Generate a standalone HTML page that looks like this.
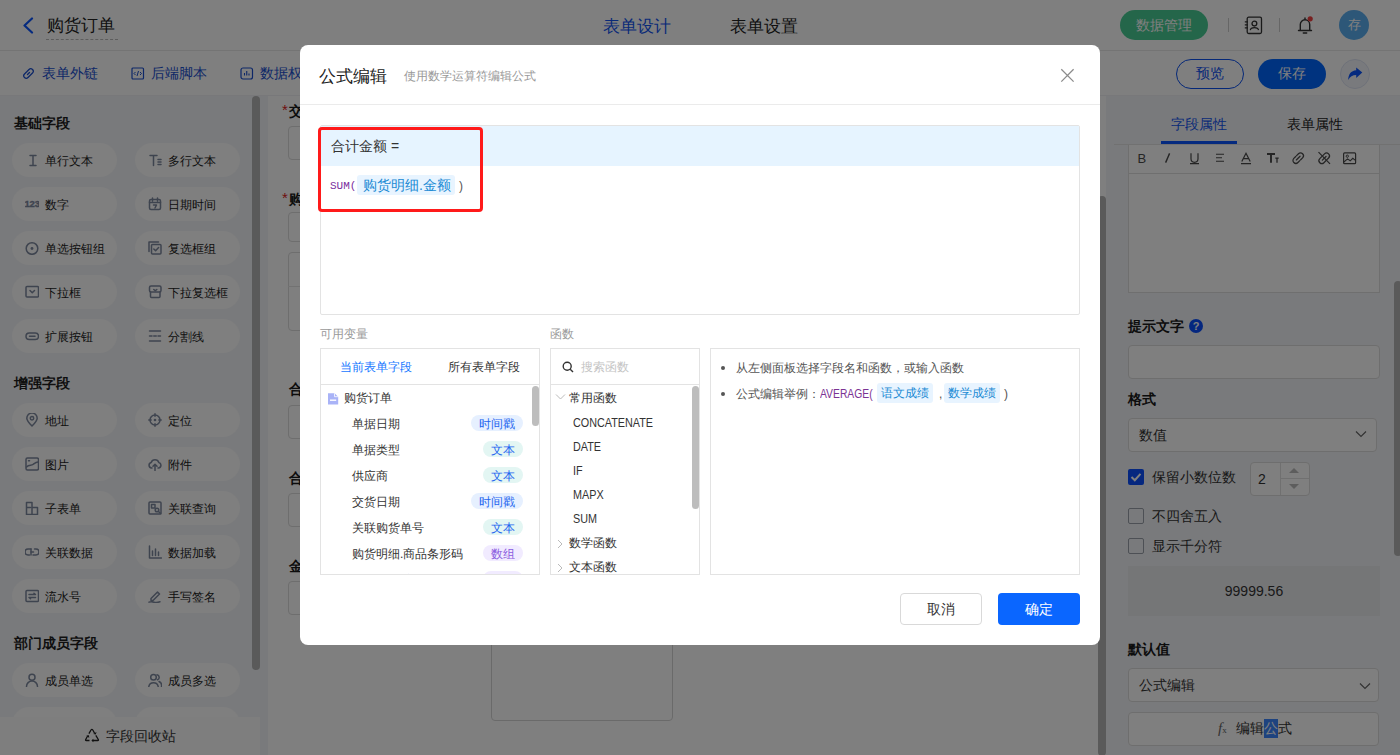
<!DOCTYPE html><html><head><meta charset="utf-8"><style>
*{box-sizing:border-box;margin:0;padding:0}
html,body{width:1400px;height:755px;overflow:hidden;background:#fff;font-family:"Liberation Sans",sans-serif;color:#333}
.a{position:absolute;white-space:nowrap}
#hdr{left:0;top:0;width:1400px;height:51px;border-bottom:1px solid #e9e9e9;background:#fff}
#tb{left:0;top:51px;width:1400px;height:45px;background:#fff;border-bottom:1px solid #f0f1f4}
#lp{left:0;top:96px;width:268px;height:659px;background:#f3f5f8}
#lgap{display:none}
#cv{left:268px;top:96px;width:838px;height:659px;background:#fff}
#rp{left:1106px;top:96px;width:294px;height:659px;background:#f3f5f8}
.fb{position:absolute;width:105px;height:34px;border-radius:17px;background:#fefefe;font-size:12px;color:#222;line-height:36px;padding-left:33px}
.fb svg{position:absolute;left:13px;top:10px}
.gt{position:absolute;left:14px;font-size:14px;font-weight:bold;color:#1f1f1f;line-height:20px}
#mask{left:0;top:0;width:1400px;height:755px;background:rgba(0,0,0,.5)}
#modal{left:300px;top:45px;width:800px;height:600px;background:#fff;border-radius:8px}
</style></head><body>
<div id="hdr" class="a"></div><div id="tb" class="a"></div><div id="lp" class="a"></div><div id="lgap" class="a"></div><div id="cv" class="a"></div><div id="rp" class="a"></div>
<svg class="a" style="left:22px;top:17px" width="12" height="17" viewBox="0 0 12 17"><path d="M10 1.5 L2.5 8.5 L10 15.5" fill="none" stroke="#0a55ff" stroke-width="2.2" stroke-linecap="round" stroke-linejoin="round"/></svg>
<div class="a" style="left:47px;top:14px;font-size:17px;line-height:24px;color:#222">购货订单</div>
<div class="a" style="left:46px;top:39px;width:72px;height:0;border-top:1px dashed #bbb"></div>
<div class="a" style="left:603px;top:15px;font-size:17px;line-height:24px;color:#1456f0">表单设计</div>
<div class="a" style="left:730px;top:15px;font-size:17px;line-height:24px;color:#222">表单设置</div>
<div class="a" style="left:1120px;top:10px;width:88px;height:30px;border-radius:15px;background:#48cc94;color:#fff;font-size:14px;line-height:30px;text-align:center">数据管理</div>
<div class="a" style="left:1228px;top:18px;width:1px;height:14px;background:#ccc"></div>
<div class="a" style="left:1279px;top:18px;width:1px;height:14px;background:#ccc"></div>
<svg class="a" style="left:1244px;top:16px" width="20" height="19" viewBox="0 0 20 19"><rect x="3.2" y="1.2" width="14.3" height="16.3" rx="1.5" fill="none" stroke="#333" stroke-width="1.3"/><circle cx="10.4" cy="7.6" r="2.4" fill="none" stroke="#333" stroke-width="1.3"/><path d="M6.3 14.2 C6.8 10.8 14 10.8 14.5 14.2" fill="none" stroke="#333" stroke-width="1.3"/><path d="M0.8 5.8h3.2M0.8 8.8h3.2M0.8 11.8h3.2" stroke="#333" stroke-width="1.2"/></svg>
<svg class="a" style="left:1296px;top:15px" width="20" height="20" viewBox="0 0 20 20"><path d="M4.3 15.5 V9.5 A4.7 4.7 0 0 1 13.7 9.5 V15.5 M2.5 15.5 H15.5 M9 3v1.5" fill="none" stroke="#333" stroke-width="1.4" stroke-linejoin="round" stroke-linecap="round"/><path d="M7.3 18 H10.7" stroke="#333" stroke-width="1.4" stroke-linecap="round"/><circle cx="14.2" cy="3.8" r="2.6" fill="#f04040"/></svg>
<div class="a" style="left:1339px;top:10px;width:30px;height:30px;border-radius:15px;background:#5aaef0;color:#fff;font-size:13px;line-height:30px;text-align:center">存</div>
<svg class="a" style="left:22px;top:67px" width="13" height="13" viewBox="0 0 13 13"><path d="M5.5 7.5 L7.5 5.5 M4.5 5 L2.5 7 A2.1 2.1 0 0 0 6 10.5 L8 8.5 M8.5 8 L10.5 6 A2.1 2.1 0 0 0 7 2.5 L5 4.5" fill="none" stroke="#1a4fd0" stroke-width="1.3" stroke-linecap="round"/></svg>
<div class="a" style="left:42px;top:63px;font-size:14px;line-height:20px;color:#1a4fd0">表单外链</div>
<svg class="a" style="left:131px;top:67px" width="14" height="13" viewBox="0 0 14 13"><rect x="1" y="1" width="11.5" height="11" rx="1" fill="none" stroke="#1a4fd0" stroke-width="1.2"/><path d="M4.5 5 L3 6.5 L4.5 8 M9 5 L10.5 6.5 L9 8 M7.5 4 L6 9" fill="none" stroke="#1a4fd0" stroke-width="1"/></svg>
<div class="a" style="left:151px;top:63px;font-size:14px;line-height:20px;color:#1a4fd0">后端脚本</div>
<svg class="a" style="left:240px;top:67px" width="14" height="13" viewBox="0 0 14 13"><rect x="1" y="1" width="11.5" height="11" rx="2" fill="none" stroke="#1a4fd0" stroke-width="1.2"/><path d="M4.5 8.5V6 M6.75 8.5V4 M9 8.5V6.5" stroke="#1a4fd0" stroke-width="1.1"/></svg>
<div class="a" style="left:260px;top:63px;font-size:14px;line-height:20px;color:#1a4fd0">数据权限</div>
<div class="a" style="left:1176px;top:59px;width:68px;height:30px;border-radius:15px;border:1px solid #0a50f0;color:#1050f0;font-size:14px;line-height:27px;text-align:center">预览</div>
<div class="a" style="left:1258px;top:59px;width:68px;height:30px;border-radius:15px;background:#0066ff;color:#fff;font-size:14px;line-height:29px;text-align:center">保存</div>
<div class="a" style="left:1340px;top:59px;width:30px;height:30px;border-radius:15px;border:1px solid #dde3f3;background:#f3f5fa"></div>
<svg class="a" style="left:1340px;top:59px" width="30" height="30" viewBox="0 0 30 30"><path d="M22.3 13.6 L16.2 8.6 V11.2 C11 11.6 8.4 15.2 8.2 21 C10 17.6 12.6 16.1 16.2 16.1 V18.9 Z" fill="#0a55ff"/></svg>
<div class="gt" style="top:113px">基础字段</div>
<div class="fb" style="left:12px;top:143px"><svg width="14" height="14" viewBox="0 0 14 14"><path d="M5 2.5h6M5 12.5h6M8 2.5v10" stroke="#7d889e" fill="none" stroke-width="1.5" stroke-linecap="round" stroke-linejoin="round"/></svg>单行文本</div>
<div class="fb" style="left:135px;top:143px"><svg width="14" height="14" viewBox="0 0 14 14"><path d="M2 2.5h7M5.5 2.5v10M10 6.5h3M10 9h3M10 11.5h3" stroke="#7d889e" fill="none" stroke-width="1.5" stroke-linecap="round" stroke-linejoin="round"/></svg>多行文本</div>
<div class="fb" style="left:12px;top:187px"><svg width="14" height="14" viewBox="0 0 14 14"><text x="-0.5" y="10.2" font-size="9.5" font-weight="bold" fill="#7d889e" stroke="#7d889e" stroke-width="0.35" letter-spacing="-0.2" font-family="Liberation Sans">123</text></svg>数字</div>
<div class="fb" style="left:135px;top:187px"><svg width="14" height="14" viewBox="0 0 14 14"><rect x="1.5" y="2.5" width="11" height="10" rx="1.5" stroke="#7d889e" fill="none" stroke-width="1.5" stroke-linecap="round" stroke-linejoin="round"/><path d="M1.5 5.5h11M4.5 1v3M9.5 1v3M5.5 8h3l-1.5 3" stroke="#7d889e" fill="none" stroke-width="1.5" stroke-linecap="round" stroke-linejoin="round" stroke-width="1.2"/></svg>日期时间</div>
<div class="fb" style="left:12px;top:231px"><svg width="14" height="14" viewBox="0 0 14 14"><circle cx="7" cy="7.5" r="5.8" stroke="#7d889e" fill="none" stroke-width="1.5" stroke-linecap="round" stroke-linejoin="round"/><circle cx="7" cy="7.5" r="1.4" fill="#7d889e"/></svg>单选按钮组</div>
<div class="fb" style="left:135px;top:231px"><svg width="14" height="14" viewBox="0 0 14 14"><rect x="3.5" y="3.5" width="9.5" height="9.5" rx="1" stroke="#7d889e" fill="none" stroke-width="1.5" stroke-linecap="round" stroke-linejoin="round"/><path d="M1 10.5V1h9.5M5.8 8l1.8 1.8 3-3.2" stroke="#7d889e" fill="none" stroke-width="1.5" stroke-linecap="round" stroke-linejoin="round"/></svg>复选框组</div>
<div class="fb" style="left:12px;top:275px"><svg width="14" height="14" viewBox="0 0 14 14"><rect x="1" y="1.5" width="12.5" height="10.5" rx="1" stroke="#7d889e" fill="none" stroke-width="1.5" stroke-linecap="round" stroke-linejoin="round"/><path d="M5 5.5l2.25 2.25 2.25-2.25" stroke="#7d889e" fill="none" stroke-width="1.5" stroke-linecap="round" stroke-linejoin="round"/></svg>下拉框</div>
<div class="fb" style="left:135px;top:275px"><svg width="14" height="14" viewBox="0 0 14 14"><rect x="1.5" y="1" width="11.5" height="6" rx="1.5" stroke="#7d889e" fill="none" stroke-width="1.5" stroke-linecap="round" stroke-linejoin="round"/><path d="M2.5 7v4.5a1 1 0 0 0 1 1h7.5a1 1 0 0 0 1-1V7M5.8 4.5l1.5 1.3 1.5-1.3" stroke="#7d889e" fill="none" stroke-width="1.5" stroke-linecap="round" stroke-linejoin="round"/></svg>下拉复选框</div>
<div class="fb" style="left:12px;top:319px"><svg width="14" height="14" viewBox="0 0 14 14"><rect x="1" y="4" width="12.5" height="6.5" rx="3.25" stroke="#7d889e" fill="none" stroke-width="1.5" stroke-linecap="round" stroke-linejoin="round"/><path d="M4.5 7.25h5.5" stroke="#7d889e" fill="none" stroke-width="1.5" stroke-linecap="round" stroke-linejoin="round"/></svg>扩展按钮</div>
<div class="fb" style="left:135px;top:319px"><svg width="14" height="14" viewBox="0 0 14 14"><path d="M1.5 2h11M1.5 7h2.5M5.75 7h2.5M10 7h2.5M1.5 12h11" stroke="#7d889e" fill="none" stroke-width="1.5" stroke-linecap="round" stroke-linejoin="round"/></svg>分割线</div>
<div class="gt" style="top:373px">增强字段</div>
<div class="fb" style="left:12px;top:403px"><svg width="14" height="14" viewBox="0 0 14 14"><path d="M7 13C3.5 9.5 1.8 7.3 1.8 5.2A5.2 5.2 0 0 1 12.2 5.2C12.2 7.3 10.5 9.5 7 13Z" stroke="#7d889e" fill="none" stroke-width="1.5" stroke-linecap="round" stroke-linejoin="round"/><circle cx="7" cy="5.3" r="1.7" stroke="#7d889e" fill="none" stroke-width="1.5" stroke-linecap="round" stroke-linejoin="round"/></svg>地址</div>
<div class="fb" style="left:135px;top:403px"><svg width="14" height="14" viewBox="0 0 14 14"><circle cx="7" cy="7" r="5" stroke="#7d889e" fill="none" stroke-width="1.5" stroke-linecap="round" stroke-linejoin="round"/><circle cx="7" cy="7" r="1.3" fill="#7d889e"/><path d="M7 .8v2.4M7 10.8v2.4M.8 7h2.4M10.8 7h2.4" stroke="#7d889e" fill="none" stroke-width="1.5" stroke-linecap="round" stroke-linejoin="round"/></svg>定位</div>
<div class="fb" style="left:12px;top:447px"><svg width="14" height="14" viewBox="0 0 14 14"><rect x="1" y="1" width="12.5" height="12" rx="1.5" stroke="#7d889e" fill="none" stroke-width="1.5" stroke-linecap="round" stroke-linejoin="round"/><path d="M1.5 10C4 7 6 9 8 7.5S11 5 13 5M3.5 3.8h1" stroke="#7d889e" fill="none" stroke-width="1.5" stroke-linecap="round" stroke-linejoin="round"/></svg>图片</div>
<div class="fb" style="left:135px;top:447px"><svg width="14" height="14" viewBox="0 0 14 14"><path d="M4 11H3.5A2.8 2.8 0 0 1 3.2 5.5 4 4 0 0 1 10.8 5.5 2.8 2.8 0 0 1 10.5 11H10M7 13.5V7.5M5 9.3l2-2 2 2" stroke="#7d889e" fill="none" stroke-width="1.5" stroke-linecap="round" stroke-linejoin="round"/></svg>附件</div>
<div class="fb" style="left:12px;top:491px"><svg width="14" height="14" viewBox="0 0 14 14"><path d="M1.5 1.5h5.5v12H1.5zM7 6.5h5.5v7H7M1.5 6.5h4" stroke="#7d889e" fill="none" stroke-width="1.5" stroke-linecap="round" stroke-linejoin="round"/></svg>子表单</div>
<div class="fb" style="left:135px;top:491px"><svg width="14" height="14" viewBox="0 0 14 14"><rect x="1" y="1" width="12" height="12" rx="1" stroke="#7d889e" fill="none" stroke-width="1.5" stroke-linecap="round" stroke-linejoin="round"/><rect x="3.5" y="3.5" width="3.5" height="3.5" stroke="#7d889e" fill="none" stroke-width="1.5" stroke-linecap="round" stroke-linejoin="round" stroke-width="1.2"/><circle cx="9" cy="9" r="1.8" stroke="#7d889e" fill="none" stroke-width="1.5" stroke-linecap="round" stroke-linejoin="round" stroke-width="1.2"/><path d="M10.3 10.3l2.5 2.5" stroke="#7d889e" fill="none" stroke-width="1.5" stroke-linecap="round" stroke-linejoin="round"/></svg>关联查询</div>
<div class="fb" style="left:12px;top:535px"><svg width="14" height="14" viewBox="0 0 14 14"><path d="M6 4H3a2 2 0 0 0 0 6h1.5M8 10h3a2 2 0 0 0 0-6H9.5M6 7h2.5" stroke="#7d889e" fill="none" stroke-width="1.5" stroke-linecap="round" stroke-linejoin="round"/><path d="M6 4v6" stroke="#7d889e" fill="none" stroke-width="1.5" stroke-linecap="round" stroke-linejoin="round"/></svg>关联数据</div>
<div class="fb" style="left:135px;top:535px"><svg width="14" height="14" viewBox="0 0 14 14"><path d="M1.5 1v12h12M4.5 10.5V6M7.5 10.5V4M10.5 10.5V7" stroke="#7d889e" fill="none" stroke-width="1.5" stroke-linecap="round" stroke-linejoin="round"/></svg>数据加载</div>
<div class="fb" style="left:12px;top:579px"><svg width="14" height="14" viewBox="0 0 14 14"><rect x="1" y="1.5" width="12.5" height="11" rx="1" stroke="#7d889e" fill="none" stroke-width="1.5" stroke-linecap="round" stroke-linejoin="round"/><path d="M4 5.5h6.5l-1.5-1.2M10.5 8.5H4l1.5 1.2" stroke="#7d889e" fill="none" stroke-width="1.5" stroke-linecap="round" stroke-linejoin="round" stroke-width="1.3"/></svg>流水号</div>
<div class="fb" style="left:135px;top:579px"><svg width="14" height="14" viewBox="0 0 14 14"><path d="M3 9.5L9.5 3 11.5 5 5 11.5H3zM1 13.2c2-1 3.5-.5 5 0s3.5.5 6-.5" stroke="#7d889e" fill="none" stroke-width="1.5" stroke-linecap="round" stroke-linejoin="round" stroke-width="1.3"/></svg>手写签名</div>
<div class="gt" style="top:633px">部门成员字段</div>
<div class="fb" style="left:12px;top:663px"><svg width="14" height="14" viewBox="0 0 14 14"><circle cx="7" cy="4.3" r="3" stroke="#7d889e" fill="none" stroke-width="1.5" stroke-linecap="round" stroke-linejoin="round"/><path d="M1.5 13.5A5.5 5.5 0 0 1 12.5 13.5" stroke="#7d889e" fill="none" stroke-width="1.5" stroke-linecap="round" stroke-linejoin="round"/></svg>成员单选</div>
<div class="fb" style="left:135px;top:663px"><svg width="14" height="14" viewBox="0 0 14 14"><circle cx="5.5" cy="4.3" r="2.8" stroke="#7d889e" fill="none" stroke-width="1.5" stroke-linecap="round" stroke-linejoin="round"/><path d="M.8 13.5A4.8 4.8 0 0 1 10.2 13.5M9 1.8A2.6 2.6 0 0 1 9.5 6.8M11 8.5a4.5 4.5 0 0 1 2.5 5" stroke="#7d889e" fill="none" stroke-width="1.5" stroke-linecap="round" stroke-linejoin="round"/></svg>成员多选</div>
<div class="fb" style="left:12px;top:707px"><svg width="14" height="14" viewBox="0 0 14 14"></svg></div>
<div class="fb" style="left:135px;top:707px"><svg width="14" height="14" viewBox="0 0 14 14"></svg></div>
<div class="a" style="left:252px;top:96px;width:8px;height:574px;border-radius:4px;background:#b4b4b4"></div>
<div class="a" style="left:0;top:717px;width:260px;height:38px;background:#fdfdfd;font-size:14px;line-height:38px;color:#333;padding-left:106px">字段回收站</div>
<svg class="a" style="left:84px;top:727px" width="16" height="16" viewBox="0 0 16 16"><path d="M5.5 13.5H2.2Q1.2 13.5 1.7 12.5L3.6 9M4.9 6.6L7 3Q7.9 1.6 8.8 3L10.6 6.2M11.8 8.3L14.3 12.5Q14.8 13.5 13.8 13.5H8.4" fill="none" stroke="#222" stroke-width="1.3" stroke-linejoin="round"/><path d="M2.4 8.6l2.6-.3.2 2.6zM9.2 6.9l2.6.6.7-2.5zM9.4 11.8l-2 1.7 2 1.7z" fill="#222"/></svg>
<div class="a" style="left:282px;top:101px;font-size:15px;line-height:18px;color:#e02020">*</div>
<div class="a" style="left:289px;top:101px;font-size:14px;line-height:20px;font-weight:600;color:#1a1a1a">交货日期</div>
<div class="a" style="left:288px;top:126px;width:400px;height:34px;border:1px solid #dcdcdc;border-radius:4px"></div>
<div class="a" style="left:282px;top:189px;font-size:15px;line-height:18px;color:#e02020">*</div>
<div class="a" style="left:289px;top:189px;font-size:14px;line-height:20px;font-weight:600;color:#1a1a1a">购货明细</div>
<div class="a" style="left:288px;top:212px;width:400px;height:30px;border:1px solid #dcdcdc;border-radius:4px"></div>
<div class="a" style="left:288px;top:252px;width:400px;height:79px;border:1px solid #dcdcdc;border-radius:4px"></div>
<div class="a" style="left:288px;top:286px;width:400px;height:1px;background:#e5e5e5"></div>
<div class="a" style="left:289px;top:379px;font-size:14px;line-height:20px;font-weight:600;color:#1a1a1a">合计数量</div>
<div class="a" style="left:288px;top:405px;width:400px;height:34px;border:1px solid #dcdcdc;border-radius:4px"></div>
<div class="a" style="left:289px;top:468px;font-size:14px;line-height:20px;font-weight:600;color:#1a1a1a">合计金额</div>
<div class="a" style="left:288px;top:493px;width:400px;height:34px;border:1px solid #dcdcdc;border-radius:4px"></div>
<div class="a" style="left:289px;top:556px;font-size:14px;line-height:20px;font-weight:600;color:#1a1a1a">金额</div>
<div class="a" style="left:288px;top:581px;width:400px;height:34px;border:1px solid #dcdcdc;border-radius:4px"></div>
<div class="a" style="left:491px;top:600px;width:182px;height:121px;border:1px solid #d5d5d5;border-radius:4px"></div>
<div class="a" style="left:1098px;top:196px;width:8px;height:560px;border-radius:4px;background:#b4b4b4"></div>
<div class="a" style="left:1114px;top:144px;width:286px;height:1px;background:#e3e3e3"></div>
<div class="a" style="left:1171px;top:114px;font-size:14px;line-height:20px;color:#1456f0">字段属性</div>
<div class="a" style="left:1287px;top:114px;font-size:14px;line-height:20px;color:#222">表单属性</div>
<div class="a" style="left:1161px;top:141px;width:76px;height:3px;background:#0a55ff"></div>
<div class="a" style="left:1128px;top:145px;width:252px;height:148px;border:1px solid #dedede;border-top:none;background:#fff"></div>
<div class="a" style="left:1128px;top:173px;width:252px;height:1px;background:#dedede"></div>
<svg class="a" style="left:1130px;top:145px" width="250" height="28" viewBox="0 0 250 28"><text x="7.6" y="17.6" font-size="13" fill="#4a4a4a" font-family="Liberation Sans">B</text><path d="M39.6 8.4 L35.6 17.6" stroke="#4a4a4a" stroke-width="1.4"/><path d="M61 8.3 V13.8 a3.5 3.5 0 0 0 7 0 V8.3 M60 18.6 H69" fill="none" stroke="#4a4a4a" stroke-width="1.2"/><path d="M86 9.3 H94 M86 12.8 H92 M86 16.2 H94" stroke="#4a4a4a" stroke-width="1.1"/><path d="M111.8 16.6 L116 8.3 L120.2 16.6 M113.3 13.6 H118.7 M111 18.6 H121" fill="none" stroke="#4a4a4a" stroke-width="1.2"/><path d="M137 9 H145 M141 9 V17.8" stroke="#4a4a4a" stroke-width="1.9"/><path d="M145.3 13.2 H148.7 M147 13.2 V17.8" stroke="#4a4a4a" stroke-width="1.3"/><g transform="rotate(-45 168.2 13.1)" fill="none" stroke="#4a4a4a" stroke-width="1.25" stroke-linecap="round"><path d="M167.6 10.2 H164.89999999999998 a2.9 2.9 0 0 0 0 5.8 H167.6"/><path d="M168.79999999999998 10.2 H171.5 a2.9 2.9 0 0 1 0 5.8 H168.79999999999998"/><path d="M165.6 13.1 H170.79999999999998"/></g><g transform="rotate(-45 194.2 13.3)" fill="none" stroke="#4a4a4a" stroke-width="1.25" stroke-linecap="round"><path d="M193.6 10.4 H190.89999999999998 a2.9 2.9 0 0 0 0 5.8 H193.6"/><path d="M194.79999999999998 10.4 H197.5 a2.9 2.9 0 0 1 0 5.8 H194.79999999999998"/><path d="M191.6 13.3 H196.79999999999998"/></g><path d="M188.5 7.2 L200 18.8" stroke="#4a4a4a" stroke-width="1.2"/><rect x="213.6" y="7.9" width="12" height="10.8" rx="1" fill="none" stroke="#4a4a4a" stroke-width="1.2"/><circle cx="217.3" cy="11.2" r="1.15" fill="none" stroke="#4a4a4a" stroke-width="1"/><path d="M213.9 17 L217.5 13.9 L220.2 15.8 L222.8 13.3 L225.4 15.4" fill="none" stroke="#4a4a4a" stroke-width="1.1"/></svg>
<div class="a" style="left:1128px;top:316px;font-size:14px;line-height:20px;font-weight:600;color:#1a1a1a">提示文字</div>
<div class="a" style="left:1189px;top:319px;width:14px;height:14px;border-radius:7px;background:#0a4fff;color:#fff;font-size:11px;line-height:14px;text-align:center;font-weight:bold">?</div>
<div class="a" style="left:1128px;top:345px;width:252px;height:34px;border:1px solid #dcdcdc;border-radius:4px;background:#fff"></div>
<div class="a" style="left:1128px;top:389px;font-size:14px;line-height:20px;font-weight:600;color:#1a1a1a">格式</div>
<div class="a" style="left:1128px;top:418px;width:249px;height:34px;border:1px solid #dcdcdc;border-radius:4px;background:#fff;font-size:14px;line-height:32px;padding-left:10px;color:#333">数值</div>
<svg class="a" style="left:1355px;top:430px" width="12" height="8" viewBox="0 0 12 8"><path d="M1 1.5L6 6.5L11 1.5" fill="none" stroke="#666" stroke-width="1.2"/></svg>
<div class="a" style="left:1128px;top:469px;width:16px;height:16px;border-radius:2px;background:#0a4fff"></div>
<svg class="a" style="left:1128px;top:469px" width="16" height="16" viewBox="0 0 16 16"><path d="M3.5 8L6.8 11.2L12.5 4.8" fill="none" stroke="#fff" stroke-width="2"/></svg>
<div class="a" style="left:1152px;top:467px;font-size:14px;line-height:20px;color:#333">保留小数位数</div>
<div class="a" style="left:1250px;top:462px;width:60px;height:34px;border:1px solid #dcdcdc;border-radius:4px;background:#fff"></div>
<div class="a" style="left:1280px;top:463px;width:1px;height:32px;background:#e0e0e0"></div>
<div class="a" style="left:1281px;top:478px;width:28px;height:1px;background:#e0e0e0"></div>
<div class="a" style="left:1258px;top:469px;font-size:14px;line-height:20px;color:#333">2</div>
<svg class="a" style="left:1289px;top:467px" width="10" height="6" viewBox="0 0 10 6"><path d="M0 6L5 1L10 6Z" fill="#bbb"/></svg>
<svg class="a" style="left:1289px;top:484px" width="10" height="6" viewBox="0 0 10 6"><path d="M0 0L5 5L10 0Z" fill="#bbb"/></svg>
<div class="a" style="left:1128px;top:508px;width:16px;height:16px;border-radius:2px;border:1px solid #9aa0aa;background:transparent"></div>
<div class="a" style="left:1152px;top:506px;font-size:14px;line-height:20px;color:#333">不四舍五入</div>
<div class="a" style="left:1128px;top:538px;width:16px;height:16px;border-radius:2px;border:1px solid #9aa0aa;background:transparent"></div>
<div class="a" style="left:1152px;top:536px;font-size:14px;line-height:20px;color:#333">显示千分符</div>
<div class="a" style="left:1128px;top:566px;width:252px;height:50px;background:#ebecee;font-size:14px;line-height:50px;text-align:center;color:#333">99999.56</div>
<div class="a" style="left:1128px;top:639px;font-size:14px;line-height:20px;font-weight:600;color:#1a1a1a">默认值</div>
<div class="a" style="left:1128px;top:668px;width:251px;height:34px;border:1px solid #dcdcdc;border-radius:4px;background:#fff;font-size:14px;line-height:32px;padding-left:10px;color:#333">公式编辑</div>
<svg class="a" style="left:1359px;top:682px" width="12" height="8" viewBox="0 0 12 8"><path d="M1 1.5L6 6.5L11 1.5" fill="none" stroke="#666" stroke-width="1.2"/></svg>
<div class="a" style="left:1128px;top:712px;width:251px;height:34px;border:1px solid #dcdcdc;border-radius:4px;background:#fff"></div>
<div class="a" style="left:1218px;top:718px;font-size:15px;line-height:20px;color:#666;font-family:Liberation Serif,serif;font-style:italic">f<span style="font-size:9px;font-style:normal">x</span></div>
<div class="a" style="left:1264px;top:719px;width:14px;height:19px;background:#3d86ff"></div>
<div class="a" style="left:1236px;top:718px;font-size:14px;line-height:20px;color:#333">编辑<span style="color:#fff">公</span>式</div>
<div class="a" style="left:1394px;top:281px;width:8px;height:275px;border-radius:4px;background:#b4b4b4"></div>
<div id="mask" class="a"></div>
<div id="modal" class="a">
<div class="a" style="left:19px;top:20px;font-size:17px;line-height:24px;color:#222">公式编辑</div>
<div class="a" style="left:104px;top:23px;font-size:12px;line-height:17px;color:#999">使用数学运算符编辑公式</div>
<svg class="a" style="left:760px;top:23px" width="15" height="15" viewBox="0 0 15 15"><path d="M1.3 1.3L13.6 13.6M13.6 1.3L1.3 13.6" stroke="#8c8c8c" stroke-width="1.3"/></svg>
<div class="a" style="left:0;top:59px;width:800px;height:1px;background:#ebebeb"></div>
<div class="a" style="left:20px;top:80px;width:760px;height:190px;border:1px solid #e3e3e3;border-radius:2px;background:#fff">
<div class="a" style="left:0;top:0;width:758px;height:40px;background:#e6f4ff"></div>
<div class="a" style="left:10px;top:10px;font-size:14px;line-height:20px;color:#333">合计金额 =</div>
<div class="a" style="left:9px;top:53px;font-size:11px;line-height:14px;color:#7a2e9e;font-family:'Liberation Mono',monospace">SUM(</div>
<div class="a" style="left:36px;top:49px;width:98px;height:20px;border-radius:3px;background:#e8f4ff;font-size:14px;line-height:20px;color:#1a8ad4;padding-left:6px">购货明细.金额</div>
<div class="a" style="left:138px;top:52px;font-size:12px;line-height:16px;color:#555">)</div>
</div>
<div class="a" style="left:18px;top:82px;width:165px;height:85px;border:3px solid #ff1a1a;border-radius:4px"></div>
<div class="a" style="left:20px;top:281px;font-size:12px;line-height:17px;color:#999">可用变量</div>
<div class="a" style="left:250px;top:281px;font-size:12px;line-height:17px;color:#999">函数</div>
<div class="a" style="left:20px;top:303px;width:220px;height:227px;border:1px solid #e3e3e3;overflow:hidden">
<div class="a" style="left:0;top:0;width:218px;height:36px;border-bottom:1px solid #e3e3e3"></div>
<div class="a" style="left:19px;top:10px;font-size:12px;line-height:17px;color:#1677ff">当前表单字段</div>
<div class="a" style="left:127px;top:10px;font-size:12px;line-height:17px;color:#333">所有表单字段</div>
<svg class="a" style="left:7px;top:44px" width="11" height="12" viewBox="0 0 11 12"><path d="M0 0.3h6.5l3.7 3.4v7.8H0z" fill="#a9b3f7"/><path d="M2 7.2h6.2" stroke="#fff" stroke-width="1.4"/><path d="M6.5 0.3v3.4h3.7" fill="none" stroke="#fff" stroke-width=".8"/></svg>
<div class="a" style="left:23px;top:41px;font-size:12px;line-height:17px;color:#333">购货订单</div>
<div class="a" style="left:31px;top:67px;font-size:12px;line-height:17px;color:#333">单据日期</div>
<div class="a" style="left:150px;top:66px;width:52px;height:16px;border-radius:8px;background:#e6f0ff;color:#1f66f0;font-size:12px;line-height:18px;text-align:center">时间戳</div>
<div class="a" style="left:31px;top:93px;font-size:12px;line-height:17px;color:#333">单据类型</div>
<div class="a" style="left:162px;top:92px;width:40px;height:16px;border-radius:8px;background:#e3f6f3;color:#1f66f0;font-size:12px;line-height:18px;text-align:center">文本</div>
<div class="a" style="left:31px;top:119px;font-size:12px;line-height:17px;color:#333">供应商</div>
<div class="a" style="left:162px;top:118px;width:40px;height:16px;border-radius:8px;background:#e3f6f3;color:#1f66f0;font-size:12px;line-height:18px;text-align:center">文本</div>
<div class="a" style="left:31px;top:145px;font-size:12px;line-height:17px;color:#333">交货日期</div>
<div class="a" style="left:150px;top:144px;width:52px;height:16px;border-radius:8px;background:#e6f0ff;color:#1f66f0;font-size:12px;line-height:18px;text-align:center">时间戳</div>
<div class="a" style="left:31px;top:171px;font-size:12px;line-height:17px;color:#333">关联购货单号</div>
<div class="a" style="left:162px;top:170px;width:40px;height:16px;border-radius:8px;background:#e3f6f3;color:#1f66f0;font-size:12px;line-height:18px;text-align:center">文本</div>
<div class="a" style="left:31px;top:197px;font-size:12px;line-height:17px;color:#333">购货明细.商品条形码</div>
<div class="a" style="left:162px;top:196px;width:40px;height:16px;border-radius:8px;background:#f1ebff;color:#8a5ce0;font-size:12px;line-height:18px;text-align:center">数组</div>
<div class="a" style="left:31px;top:223px;font-size:12px;line-height:17px;color:#333">购货明细.商品名称</div>
<div class="a" style="left:162px;top:222px;width:40px;height:16px;border-radius:8px;background:#f1ebff;color:#8a5ce0;font-size:12px;line-height:18px;text-align:center">数组</div>
<div class="a" style="left:211px;top:37px;width:7px;height:40px;border-radius:4px;background:#bdbdbd"></div>
</div>
<div class="a" style="left:250px;top:303px;width:150px;height:227px;border:1px solid #e3e3e3;overflow:hidden">
<div class="a" style="left:0;top:0;width:148px;height:36px;border-bottom:1px solid #e3e3e3"></div>
<svg class="a" style="left:11px;top:12px" width="12" height="12" viewBox="0 0 12 12"><circle cx="5.2" cy="5.2" r="4" fill="none" stroke="#333" stroke-width="1.4"/><path d="M8.2 8.2L11 11" stroke="#333" stroke-width="1.4"/></svg>
<div class="a" style="left:30px;top:10px;font-size:12px;line-height:17px;color:#c4c4c4">搜索函数</div>
<svg class="a" style="left:4px;top:44px" width="11" height="8" viewBox="0 0 11 8"><path d="M1 1.5L5.5 6L10 1.5" fill="none" stroke="#bbb" stroke-width="1"/></svg>
<div class="a" style="left:18px;top:41px;font-size:12px;line-height:17px;color:#333">常用函数</div>
<div class="a" style="left:22px;top:66px;font-size:12px;line-height:17px;color:#333;transform:scaleX(.9);transform-origin:0 0">CONCATENATE</div>
<div class="a" style="left:22px;top:90px;font-size:12px;line-height:17px;color:#333;transform:scaleX(.9);transform-origin:0 0">DATE</div>
<div class="a" style="left:22px;top:114px;font-size:12px;line-height:17px;color:#333;transform:scaleX(.9);transform-origin:0 0">IF</div>
<div class="a" style="left:22px;top:138px;font-size:12px;line-height:17px;color:#333;transform:scaleX(.9);transform-origin:0 0">MAPX</div>
<div class="a" style="left:22px;top:162px;font-size:12px;line-height:17px;color:#333;transform:scaleX(.9);transform-origin:0 0">SUM</div>
<svg class="a" style="left:6px;top:190px" width="6" height="10" viewBox="0 0 6 10"><path d="M1 1L5 5L1 9" fill="none" stroke="#bbb" stroke-width="1"/></svg>
<div class="a" style="left:18px;top:186px;font-size:12px;line-height:17px;color:#333">数学函数</div>
<svg class="a" style="left:6px;top:214px" width="6" height="10" viewBox="0 0 6 10"><path d="M1 1L5 5L1 9" fill="none" stroke="#bbb" stroke-width="1"/></svg>
<div class="a" style="left:18px;top:210px;font-size:12px;line-height:17px;color:#333">文本函数</div>
<div class="a" style="left:141px;top:37px;width:7px;height:123px;border-radius:4px;background:#bdbdbd"></div>
</div>
<div class="a" style="left:410px;top:303px;width:370px;height:227px;border:1px solid #e3e3e3">
<div class="a" style="left:10px;top:17px;width:4px;height:4px;border-radius:2px;background:#555"></div>
<div class="a" style="left:10px;top:43px;width:4px;height:4px;border-radius:2px;background:#555"></div>
<div class="a" style="left:25px;top:11px;font-size:12px;line-height:17px;color:#555">从左侧面板选择字段名和函数，或输入函数</div>
<div class="a" style="left:25px;top:37px;font-size:12px;line-height:17px;color:#555">公式编辑举例：<span style="color:#7b3394;display:inline-block;transform:scaleX(.86);transform-origin:0 0">AVERAGE(</span></div>
<div class="a" style="left:166px;top:34px;width:56px;height:20px;border-radius:3px;background:#e8f4ff;font-size:12px;line-height:20px;color:#1a8ad4;text-align:center">语文成绩</div>
<div class="a" style="left:228px;top:37px;font-size:12px;line-height:17px;color:#555">,</div>
<div class="a" style="left:233px;top:34px;width:56px;height:20px;border-radius:3px;background:#e8f4ff;font-size:12px;line-height:20px;color:#1a8ad4;text-align:center">数学成绩</div>
<div class="a" style="left:293px;top:37px;font-size:12px;line-height:17px;color:#555">)</div>
</div>
<div class="a" style="left:600px;top:548px;width:82px;height:32px;border:1px solid #d9d9d9;border-radius:4px;font-size:14px;line-height:30px;text-align:center;color:#333">取消</div>
<div class="a" style="left:698px;top:548px;width:82px;height:32px;border-radius:4px;background:#0a66ff;font-size:14px;line-height:32px;text-align:center;color:#fff">确定</div>
</div>
</body></html>
